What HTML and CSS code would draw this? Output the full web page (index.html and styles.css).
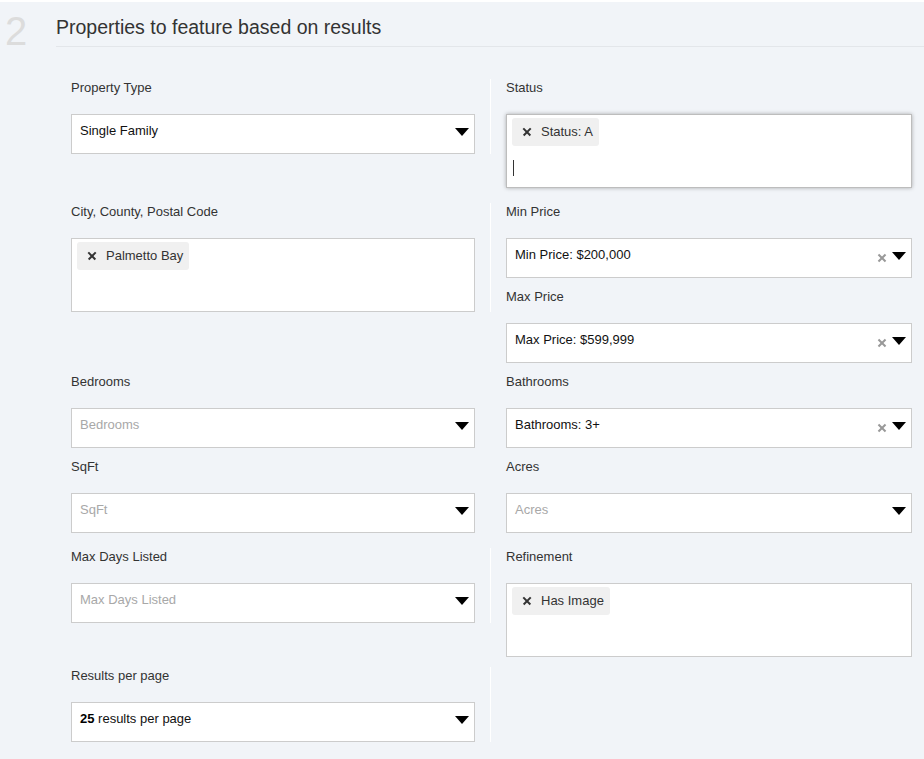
FILE: index.html
```html
<!DOCTYPE html>
<html lang="en">
<head>
  <meta charset="UTF-8" />
  <title>Properties to feature</title>
  <link rel="stylesheet" href="styles.css">
</head>
<body>

<div class="section">
  <div class="section-head">
    <div class="step">2</div>
    <h2>Properties to feature based on results</h2>
  </div>

  <div class="form">
    <!-- row 1 -->
    <div class="row">
      <div class="col">
        <div class="group sep">
          <label>Property Type</label>
          <div class="field">Single Family<span class="arrow"></span></div>
        </div>
      </div>
      <div class="col">
        <div class="group">
          <label>Status</label>
          <div class="field multi focus">
            <span class="chip"><span class="x"></span>Status: A</span>
            <div class="cursor"></div>
          </div>
        </div>
      </div>
    </div>

    <!-- row 2 -->
    <div class="row spaced">
      <div class="col">
        <div class="group sep">
          <label>City, County, Postal Code</label>
          <div class="field multi">
            <span class="chip"><span class="x"></span>Palmetto Bay</span>
          </div>
        </div>
      </div>
      <div class="col">
        <div class="group">
          <label>Min Price</label>
          <div class="field">Min Price: $200,000<span class="clear"></span><span class="arrow"></span></div>
        </div>
        <div class="group">
          <label>Max Price</label>
          <div class="field">Max Price: $599,999<span class="clear"></span><span class="arrow"></span></div>
        </div>
      </div>
    </div>

    <!-- row 3 -->
    <div class="row">
      <div class="col">
        <div class="group">
          <label>Bedrooms</label>
          <div class="field empty">Bedrooms<span class="arrow"></span></div>
        </div>
      </div>
      <div class="col">
        <div class="group">
          <label>Bathrooms</label>
          <div class="field">Bathrooms: 3+<span class="clear"></span><span class="arrow"></span></div>
        </div>
      </div>
    </div>

    <!-- row 4 -->
    <div class="row">
      <div class="col">
        <div class="group">
          <label>SqFt</label>
          <div class="field empty">SqFt<span class="arrow"></span></div>
        </div>
      </div>
      <div class="col">
        <div class="group">
          <label>Acres</label>
          <div class="field empty">Acres<span class="arrow"></span></div>
        </div>
      </div>
    </div>

    <!-- row 5 -->
    <div class="row spaced">
      <div class="col">
        <div class="group sep">
          <label>Max Days Listed</label>
          <div class="field empty">Max Days Listed<span class="arrow"></span></div>
        </div>
      </div>
      <div class="col">
        <div class="group">
          <label>Refinement</label>
          <div class="field multi">
            <span class="chip"><span class="x"></span>Has Image</span>
          </div>
        </div>
      </div>
    </div>

    <!-- row 6 -->
    <div class="row">
      <div class="col">
        <div class="group sep">
          <label>Results per page</label>
          <div class="field"><b>25</b> results per page<span class="arrow"></span></div>
        </div>
      </div>
      <div class="col"></div>
    </div>
  </div>
</div>

</body>
</html>
```

FILE: styles.css
```css
body {
  margin: 0;
  background: #fff;
  font-family: "Liberation Sans", Arial, sans-serif;
  color: #333;
}

.section {
  margin-top: 2px;
  background: #f1f4f8;
  min-height: 757px;
}

.section-head {
  display: flex;
  align-items: flex-start;
  padding-top: 13px;
}

.step {
  width: 51px;
  padding-left: 5px;
  margin-top: -4px;
  font-size: 40px;
  line-height: 40px;
  color: #dcdcdc;
}

.section-head h2 {
  flex: 1;
  margin: 0;
  padding-bottom: 7px;
  font-size: 19.5px;
  line-height: 24px;
  font-weight: normal;
  color: #333;
  border-bottom: 1px solid #e3e6ea;
}

.form {
  padding: 28px 0 0 71px;
}

.row {
  display: flex;
}

.row.spaced {
  margin-top: 5px;
}

.col {
  width: 420px;
}

.col + .col {
  width: 421px;
}

.group {
  margin-bottom: 10px;
}

.col:first-child .group {
  padding-right: 15px;
  border-right: 1px solid transparent;
}

.col:first-child .group.sep {
  border-right-color: #fff;
}

.col + .col .group {
  padding-left: 15px;
}

label {
  display: block;
  font-size: 13px;
  line-height: 18px;
  margin-bottom: 17px;
  color: #333;
}

.field {
  position: relative;
  box-sizing: border-box;
  height: 40px;
  padding: 7px 40px 0 8px;
  background: #fff;
  border: 1px solid #ccc;
  font-size: 13px;
  line-height: 18px;
  color: #111;
}

.field b {
  color: #000;
}

.field.empty {
  color: #a8a8a8;
}

.field.multi {
  height: 74px;
  padding: 3px 5px 0;
}

.field.focus {
  border-color: #bdbdbd;
  box-shadow: 0 0 4px rgba(0, 0, 0, 0.3);
}

.arrow {
  position: absolute;
  right: 5px;
  top: 13px;
  width: 0;
  height: 0;
  border-left: 7.5px solid transparent;
  border-right: 7.5px solid transparent;
  border-top: 8px solid #000;
}

.clear {
  position: absolute;
  right: 25px;
  top: 15px;
  width: 8px;
  height: 8px;
}

.clear::before,
.clear::after {
  content: "";
  position: absolute;
  left: -1px;
  top: 3px;
  width: 10px;
  height: 2px;
  background: #999;
  transform: rotate(45deg);
}

.clear::after {
  transform: rotate(-45deg);
}

.chip {
  display: inline-flex;
  align-items: center;
  height: 28px;
  padding: 0 6px 0 11px;
  background: #f0f0f0;
  border-radius: 3px;
  color: #333;
}

.chip .x {
  position: relative;
  width: 8px;
  height: 8px;
  margin-right: 10px;
}

.chip .x::before,
.chip .x::after {
  content: "";
  position: absolute;
  left: -1px;
  top: 3px;
  width: 10px;
  height: 1.5px;
  background: #333;
  transform: rotate(45deg);
}

.chip .x::after {
  transform: rotate(-45deg);
}

.cursor {
  width: 1px;
  height: 16px;
  margin: 14px 0 0 1px;
  background: #333;
}
```
